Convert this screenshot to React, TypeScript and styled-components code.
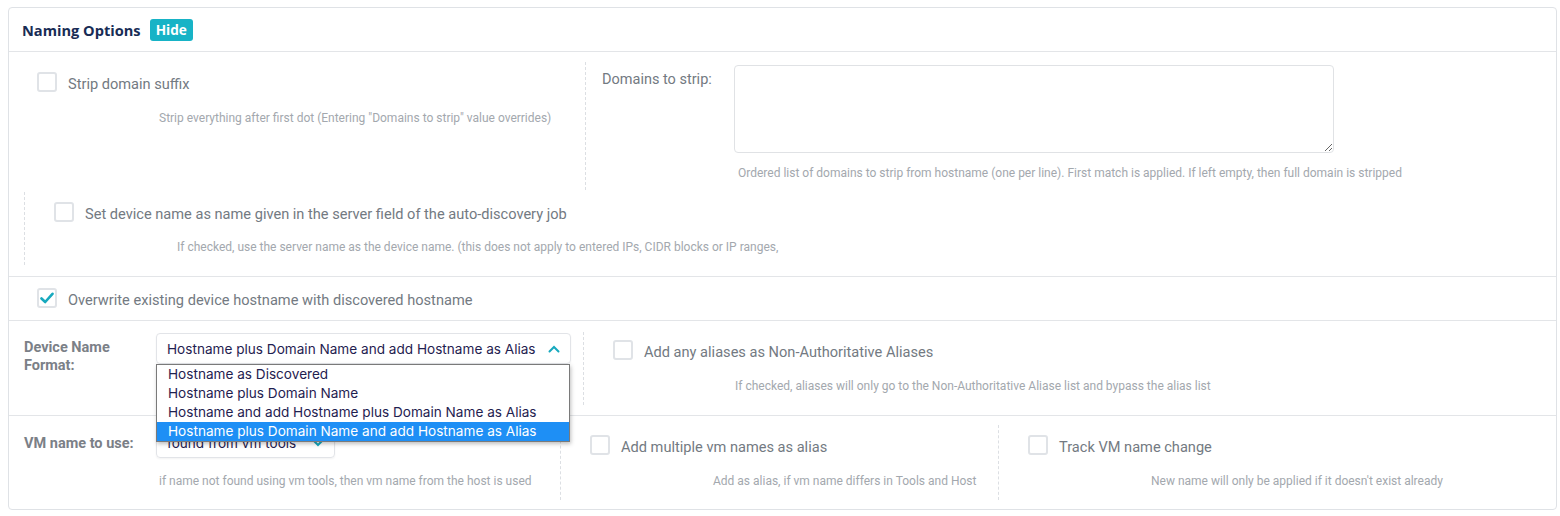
import React from 'react';
import styled, { createGlobalStyle } from 'styled-components';

const GlobalStyle = createGlobalStyle`
    body {
        margin: 0;
        background: #fff;
        font-family: Roboto, "Liberation Sans", sans-serif;
    }
`;

const Card = styled.div`
    box-sizing: border-box;
    width: 1549px;
    margin: 7px 0 0 8px;
    border: 1px solid #dfe2e6;
    border-radius: 4px;
    background: #fff;
`;

const Header = styled.div`
    display: flex;
    align-items: center;
    height: 43px;
    padding-left: 13px;
    border-bottom: 1px solid #e3e5e8;
`;

const Title = styled.span`
    font-family: "Open Sans", sans-serif;
    font-weight: 700;
    font-size: 14.6px;
    color: #182c55;
`;

const Badge = styled.span`
    margin-left: 9px;
    height: 22px;
    line-height: 22px;
    padding: 0 6px;
    border-radius: 3px;
    background: #17b3c6;
    color: #fff;
    font-family: "Open Sans", sans-serif;
    font-weight: 700;
    font-size: 13.6px;
`;

const Section = styled.div<{ $last?: boolean }>`
    border-bottom: ${p => (p.$last ? 'none' : '1px solid #e3e5e8')};
`;

const Split = styled.div<{ $cols: string; $pad?: string }>`
    display: grid;
    grid-template-columns: ${p => p.$cols};
    padding: ${p => p.$pad || '0'};
`;

const Col = styled.div<{ $pad?: string; $dashedRight?: boolean; $h?: number }>`
    box-sizing: border-box;
    padding: ${p => p.$pad || '0'};
    min-height: ${p => (p.$h ? `${p.$h}px` : 'auto')};
    border-right: ${p => (p.$dashedRight ? '1px dashed #dcdfe3' : 'none')};
`;

const DashedBlock = styled.div<{ $mt: number; $h: number; $ml?: number; $pt?: number }>`
    box-sizing: border-box;
    margin: ${p => p.$mt}px 0 0 ${p => p.$ml || 0}px;
    height: ${p => p.$h}px;
    padding: ${p => p.$pt ?? 10}px 0 0 29px;
    border-left: 1px dashed #dcdfe3;
`;

const CheckRow = styled.label`
    display: flex;
    align-items: center;
    gap: 11px;
    height: 20px;
    font-size: 14.6px;
    color: #737a82;
`;

const CheckText = styled.span`
    padding-top: 4px;
    white-space: nowrap;
`;

const Box = styled.span`
    box-sizing: border-box;
    flex: none;
    width: 20px;
    height: 20px;
    border: 2px solid #e0e3e7;
    border-radius: 3px;
    display: flex;
    align-items: center;
    justify-content: center;
`;

const Help = styled.div<{ $mt: number; $ml?: number }>`
    margin: ${p => p.$mt}px 0 0 ${p => p.$ml ?? 122}px;
    font-size: 12px;
    line-height: 14px;
    color: #a3a8ae;
    white-space: nowrap;
`;

const FieldRow = styled.div`
    display: flex;
    align-items: flex-start;
`;

const FieldLabel = styled.div<{ $pt: number; $bold?: boolean }>`
    flex: none;
    width: 132px;
    padding-top: ${p => p.$pt}px;
    font-size: 14.5px;
    font-weight: ${p => (p.$bold ? 700 : 400)};
    line-height: 18px;
    color: ${p => (p.$bold ? '#7b8087' : '#737a82')};
    white-space: nowrap;
`;

const TextArea = styled.textarea`
    box-sizing: border-box;
    width: 600px;
    height: 88px;
    border: 1px solid #e0e2e5;
    border-radius: 4px;
    outline: none;
    resize: both;
`;

const SelectWrap = styled.div<{ $w: number }>`
    position: relative;
    width: ${p => p.$w}px;
`;

const SelectBox = styled.div`
    box-sizing: border-box;
    display: flex;
    align-items: center;
    justify-content: space-between;
    height: 31px;
    padding: 0 10px 0 10px;
    border: 1px solid #e2e4e8;
    border-radius: 4px;
    box-shadow: 0 1px 2px rgba(0, 0, 0, 0.05);
    font-family: Inter, sans-serif;
    font-size: 13.6px;
    color: #1f2150;
    white-space: nowrap;
`;

const Menu = styled.ul`
    position: absolute;
    z-index: 5;
    top: 31px;
    left: 0;
    box-sizing: border-box;
    width: 414px;
    margin: 0;
    padding: 0;
    list-style: none;
    background: #fff;
    border: 1px solid #7a7a7a;
    box-shadow: 1px 2px 4px rgba(0, 0, 0, 0.25);
`;

const Option = styled.li<{ $active?: boolean }>`
    height: 19px;
    line-height: 19px;
    padding-left: 11px;
    font-family: Inter, sans-serif;
    font-size: 13.6px;
    color: ${p => (p.$active ? '#fff' : '#1f2150')};
    background: ${p => (p.$active ? '#1e8ff5' : 'transparent')};
    white-space: nowrap;
`;

const Spacer = styled.div<{ $h: number }>`
    height: ${p => p.$h}px;
`;

function Check({ checked, label }: { checked?: boolean; label: string }) {
    return (
        <CheckRow>
            <Box>
                {checked && (
                    <svg width="14" height="12" viewBox="0 0 14 12">
                        <path d="M1.5 6.5 L5.2 10 L12.5 1.8" fill="none" stroke="#17a9be" strokeWidth="2.6" strokeLinecap="round" strokeLinejoin="round" />
                    </svg>
                )}
            </Box>
            <CheckText>{label}</CheckText>
        </CheckRow>
    );
}

function Chevron({ up }: { up?: boolean }) {
    return (
        <svg width="12" height="8" viewBox="0 0 12 8">
            <path d={up ? 'M1.5 6.5 L6 2 L10.5 6.5' : 'M1.5 1.5 L6 6 L10.5 1.5'} fill="none" stroke="#17a9be" strokeWidth="2" strokeLinecap="round" />
        </svg>
    );
}

const formats = [
    'Hostname as Discovered',
    'Hostname plus Domain Name',
    'Hostname and add Hostname plus Domain Name as Alias',
    'Hostname plus Domain Name and add Hostname as Alias',
];

export default function App() {
    return (
        <>
            <GlobalStyle />
            <Card>
                <Header>
                    <Title>Naming Options</Title>
                    <Badge>Hide</Badge>
                </Header>

                <Section>
                    <Split $cols="577px 1fr" $pad="10px 0 0 0">
                        <Col $pad="10px 0 0 28px" $dashedRight $h={128}>
                            <Check label="Strip domain suffix" />
                            <Help $mt={19}>Strip everything after first dot (Entering "Domains to strip" value overrides)</Help>
                        </Col>
                        <Col $pad="3px 0 0 16px">
                            <FieldRow>
                                <FieldLabel $pt={6}>Domains to strip:</FieldLabel>
                                <TextArea />
                            </FieldRow>
                            <Help $mt={13} $ml={136}>Ordered list of domains to strip from hostname (one per line). First match is applied. If left empty, then full domain is stripped</Help>
                        </Col>
                    </Split>
                    <DashedBlock $mt={2} $h={73} $ml={15}>
                        <Check label="Set device name as name given in the server field of the auto-discovery job" />
                        <Help $mt={18} $ml={123}>If checked, use the server name as the device name. (this does not apply to entered IPs, CIDR blocks or IP ranges,</Help>
                    </DashedBlock>
                    <Spacer $h={11} />
                </Section>

                <Section>
                    <Col $pad="11px 0 12px 28px">
                        <Check checked label="Overwrite existing device hostname with discovered hostname" />
                    </Col>
                </Section>

                <Section>
                    <Split $cols="574px 1fr" $pad="0 0 10px 0">
                        <Col $pad="12px 0 0 15px">
                            <FieldRow>
                                <FieldLabel $pt={6} $bold>Device Name<br />Format:</FieldLabel>
                                <SelectWrap $w={415}>
                                    <SelectBox>
                                        <span>{formats[3]}</span>
                                        <Chevron up />
                                    </SelectBox>
                                    <Menu>
                                        {formats.map((f, i) => (
                                            <Option key={f} $active={i === 3}>{f}</Option>
                                        ))}
                                    </Menu>
                                </SelectWrap>
                            </FieldRow>
                        </Col>
                        <DashedBlock $mt={11} $h={73} $pt={8}>
                            <Check label="Add any aliases as Non-Authoritative Aliases" />
                            <Help $mt={19}>If checked, aliases will only go to the Non-Authoritative Aliase list and bypass the alias list</Help>
                        </DashedBlock>
                    </Split>
                </Section>

                <Section $last>
                    <Split $cols="551px 438px 1fr" $pad="0 0 9px 0">
                        <Col $pad="11px 0 0 15px">
                            <FieldRow>
                                <FieldLabel $pt={8} $bold>VM name to use:</FieldLabel>
                                <SelectWrap $w={179}>
                                    <SelectBox>
                                        <span>found from vm tools</span>
                                        <Chevron />
                                    </SelectBox>
                                </SelectWrap>
                            </FieldRow>
                            <Help $mt={16} $ml={135}>if name not found using vm tools, then vm name from the host is used</Help>
                        </Col>
                        <DashedBlock $mt={9} $h={75}>
                            <Check label="Add multiple vm names as alias" />
                            <Help $mt={19} $ml={123}>Add as alias, if vm name differs in Tools and Host</Help>
                        </DashedBlock>
                        <DashedBlock $mt={9} $h={75}>
                            <Check label="Track VM name change" />
                            <Help $mt={19} $ml={123}>New name will only be applied if it doesn't exist already</Help>
                        </DashedBlock>
                    </Split>
                </Section>
            </Card>
        </>
    );
}
